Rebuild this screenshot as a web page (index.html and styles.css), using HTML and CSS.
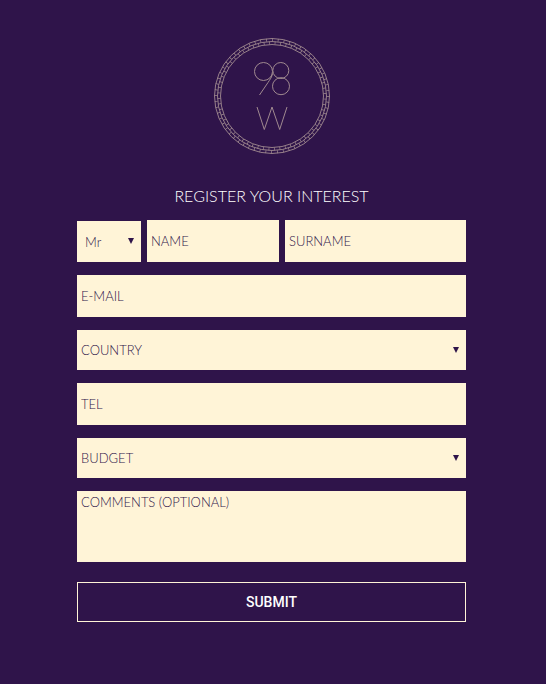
FILE: index.html
```html
<!DOCTYPE html>
<html lang="en">
<head>
<meta charset="utf-8">
<meta name="viewport" content="width=device-width, initial-scale=1">
<title>98 W – Register your interest</title>
<link rel="stylesheet" href="styles.css">
</head>
<body>
<main class="register">
  <svg class="logo" viewBox="0 0 118 118" role="img" aria-label="98 W">
    <g class="rings">
      <circle cx="59" cy="59" r="57.5"/>
      <circle cx="59" cy="59" r="54.5"/>
      <circle cx="59" cy="59" r="51.5"/>
    </g>
    <g class="bricks">
      <circle cx="59" cy="59" r="56" pathLength="480" stroke-dasharray="1 7"/>
      <circle cx="59" cy="59" r="53" pathLength="480" stroke-dasharray="1 7" stroke-dashoffset="4"/>
    </g>
    <g class="mark">
      <circle cx="50.5" cy="34.5" r="9"/>
      <circle cx="67.8" cy="33.5" r="8"/>
      <circle cx="68" cy="49.2" r="8.5"/>
      <path d="M59.5 36.5C59 40 57 42.500 55 45.500L46.500 58"/>
      <path d="M44 70L51.300 92.500L59 70L66.700 92.500L74 70"/>
    </g>
  </svg>
  <h1 class="title">REGISTER YOUR INTEREST</h1>
  <form class="form">
    <div class="names">
      <div class="select select-title">
        <select aria-label="Title"><option>Mr</option><option>Mrs</option><option>Ms</option></select>
      </div>
      <input class="field" type="text" placeholder="NAME" aria-label="Name">
      <input class="field" type="text" placeholder="SURNAME" aria-label="Surname">
    </div>
    <input class="field" type="email" placeholder="E-MAIL" aria-label="E-mail">
    <div class="select">
      <select aria-label="Country"><option>COUNTRY</option></select>
    </div>
    <input class="field" type="tel" placeholder="TEL" aria-label="Telephone">
    <div class="select">
      <select aria-label="Budget"><option>BUDGET</option></select>
    </div>
    <textarea class="field comments" placeholder="COMMENTS (OPTIONAL)" aria-label="Comments"></textarea>
    <button class="submit" type="submit">SUBMIT</button>
  </form>
</main>
</body>
</html>
```
FILE: styles.css
```css
* {
  box-sizing: border-box;
}

body {
  margin: 0;
  background: #2f144a;
  color: #fff;
  font-family: Lato, "Liberation Sans", sans-serif;
}

.register {
  padding: 37px 80px 62px 77px;
}

.logo {
  display: block;
  width: 118px;
  height: 118px;
  margin: 0 auto;
  fill: none;
  stroke: #a08a90;
}

.rings {
  stroke-width: 0.9;
}

.bricks {
  stroke-width: 3;
}

.mark {
  stroke-width: 1;
}

.title {
  margin: 30px 0 13px;
  font-size: 16px;
  font-weight: 300;
  line-height: 22px;
  text-align: center;
}

.form {
  display: flex;
  flex-direction: column;
  gap: 13px;
}

.names {
  display: grid;
  grid-template-columns: 64px 132fr 181fr;
  gap: 6px;
  align-items: end;
}

.field,
.select select {
  display: block;
  width: 100%;
  min-width: 0;
  margin: 0;
  border: 0;
  border-radius: 0;
  background: #fff4d7;
  color: #2f144a;
  font-family: Lato, "Liberation Sans", sans-serif;
  font-size: 13px;
  font-weight: 300;
}

.field {
  height: 42px;
  padding: 0 4px;
}

.field::placeholder {
  color: #2f144a;
  opacity: 1;
}

.select {
  position: relative;
}

.select select {
  height: 40px;
  padding: 0 24px 0 4px;
  appearance: none;
}

.select-title select {
  height: 41px;
  padding-left: 8px;
}

.select::after {
  content: "";
  position: absolute;
  top: 17px;
  right: 7px;
  border: solid transparent;
  border-width: 6px 3px 0;
  border-top-color: #2f144a;
  pointer-events: none;
}

.comments {
  height: 71px;
  padding: 3px 4px;
  line-height: 16px;
  resize: none;
}

.submit {
  height: 40px;
  margin-top: 7px;
  border: 1px solid #fff4d7;
  background: transparent;
  color: #fff;
  font-family: Roboto, "Liberation Sans", sans-serif;
  font-size: 14px;
  font-weight: 500;
}
```
